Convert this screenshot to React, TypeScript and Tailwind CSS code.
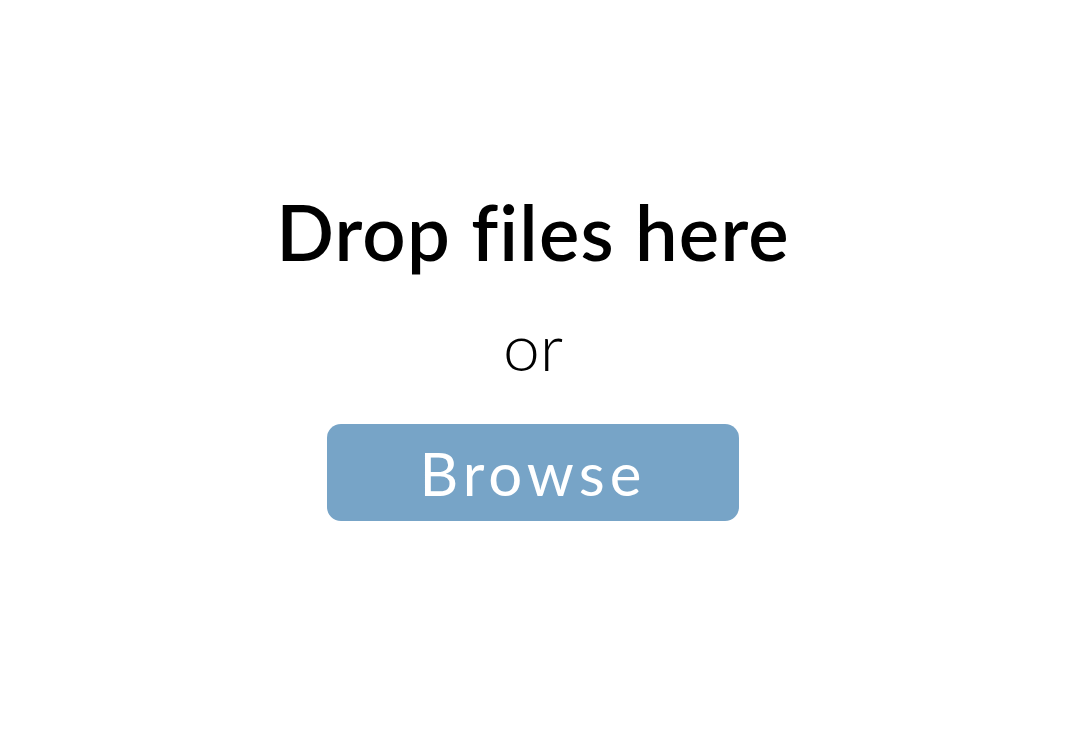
export default function App() {
  return (
    <div
      className="flex h-[755px] w-full flex-col items-center bg-white pt-[178px]"
      style={{ fontFamily: "Lato, 'Noto Sans', sans-serif" }}
    >
      <h1 className="text-[76px] font-semibold leading-[108px] tracking-[1.2px] text-black">Drop files here</h1>
      <p className="mt-[20px] text-[66px] font-light leading-[80px] text-black">or</p>
      <button
        type="button"
        className="mt-[38px] flex h-[97px] w-[412px] items-center justify-center rounded-[14px] bg-[#77a4c7] text-[60px] font-normal tracking-[5px] text-white"
      >
        Browse
      </button>
    </div>
  )
}
